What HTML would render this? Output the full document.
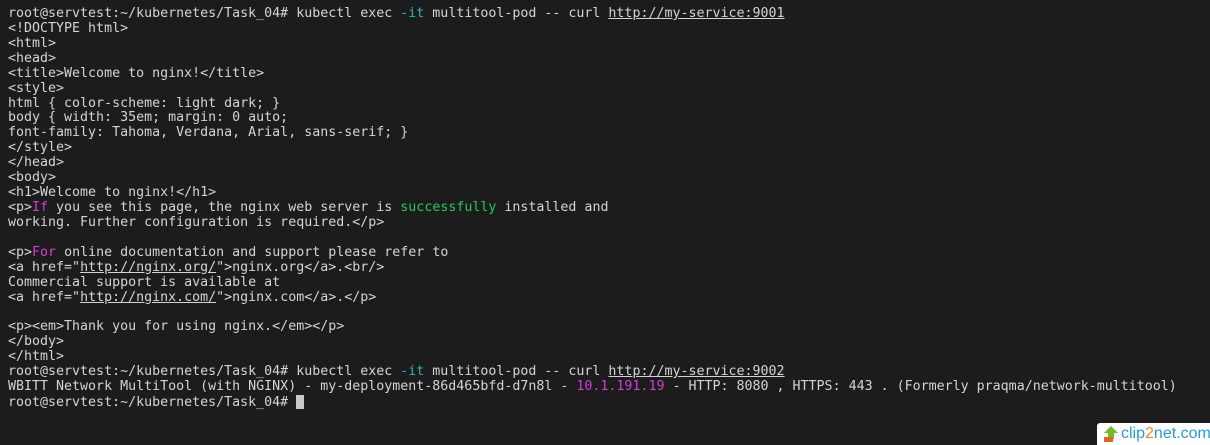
<!DOCTYPE html>
<html><head><meta charset="utf-8"><style>
html,body{margin:0;padding:0;background:#1c1c1c;width:1210px;height:445px;overflow:hidden}
pre{margin:0;position:absolute;left:8px;top:7px;font-family:"DejaVu Sans Mono","Liberation Mono",monospace;font-size:13.3px;line-height:14.92px;color:#d4d4d4;white-space:pre}
.c{color:#2bb3b8}.m{color:#d63bd6}.g{color:#23c95f}.u{text-decoration:underline}
.cur{display:inline-block;width:8px;height:14px;background:#c8c8c8;vertical-align:-3px}
.logo{position:absolute;left:1097px;top:423px;width:113px;height:22px;background:#fff;border-radius:3px 0 0 0;font-family:"Liberation Sans",sans-serif;font-size:16px;line-height:22px}
</style></head><body>
<pre>root@servtest:~/kubernetes/Task_04# kubectl exec <span class="c">-it</span> multitool-pod -- curl <span class="u">http://my-service:9001</span>
&lt;!DOCTYPE html&gt;
&lt;html&gt;
&lt;head&gt;
&lt;title&gt;Welcome to nginx!&lt;/title&gt;
&lt;style&gt;
html { color-scheme: light dark; }
body { width: 35em; margin: 0 auto;
font-family: Tahoma, Verdana, Arial, sans-serif; }
&lt;/style&gt;
&lt;/head&gt;
&lt;body&gt;
&lt;h1&gt;Welcome to nginx!&lt;/h1&gt;
&lt;p&gt;<span class="m">If</span> you see this page, the nginx web server is <span class="g">successfully</span> installed and
working. Further configuration is required.&lt;/p&gt;

&lt;p&gt;<span class="m">For</span> online documentation and support please refer to
&lt;a href="<span class="u">http://nginx.org/</span>"&gt;nginx.org&lt;/a&gt;.&lt;br/&gt;
Commercial support is available at
&lt;a href="<span class="u">http://nginx.com/</span>"&gt;nginx.com&lt;/a&gt;.&lt;/p&gt;

&lt;p&gt;&lt;em&gt;Thank you for using nginx.&lt;/em&gt;&lt;/p&gt;
&lt;/body&gt;
&lt;/html&gt;
root@servtest:~/kubernetes/Task_04# kubectl exec <span class="c">-it</span> multitool-pod -- curl <span class="u">http://my-service:9002</span>
WBITT Network MultiTool (with NGINX) - my-deployment-86d465bfd-d7n8l - <span class="m">10.1.191.19</span> - HTTP: 8080 , HTTPS: 443 . (Formerly praqma/network-multitool)
root@servtest:~/kubernetes/Task_04# <span class="cur"></span></pre>
<div class="logo"><svg width="18" height="18" style="position:absolute;left:5px;top:2px" viewBox="0 0 18 18"><path d="M9 1 L16 8 H12 V14 H6 V8 H2 Z" fill="#6cbf2a"/><rect x="2" y="12" width="9" height="5" fill="#e8631c"/></svg><span style="position:absolute;left:24px;color:#2a9ad6">clip<span style="color:#f08a1c">2</span>net.com</span></div>
</body></html>
